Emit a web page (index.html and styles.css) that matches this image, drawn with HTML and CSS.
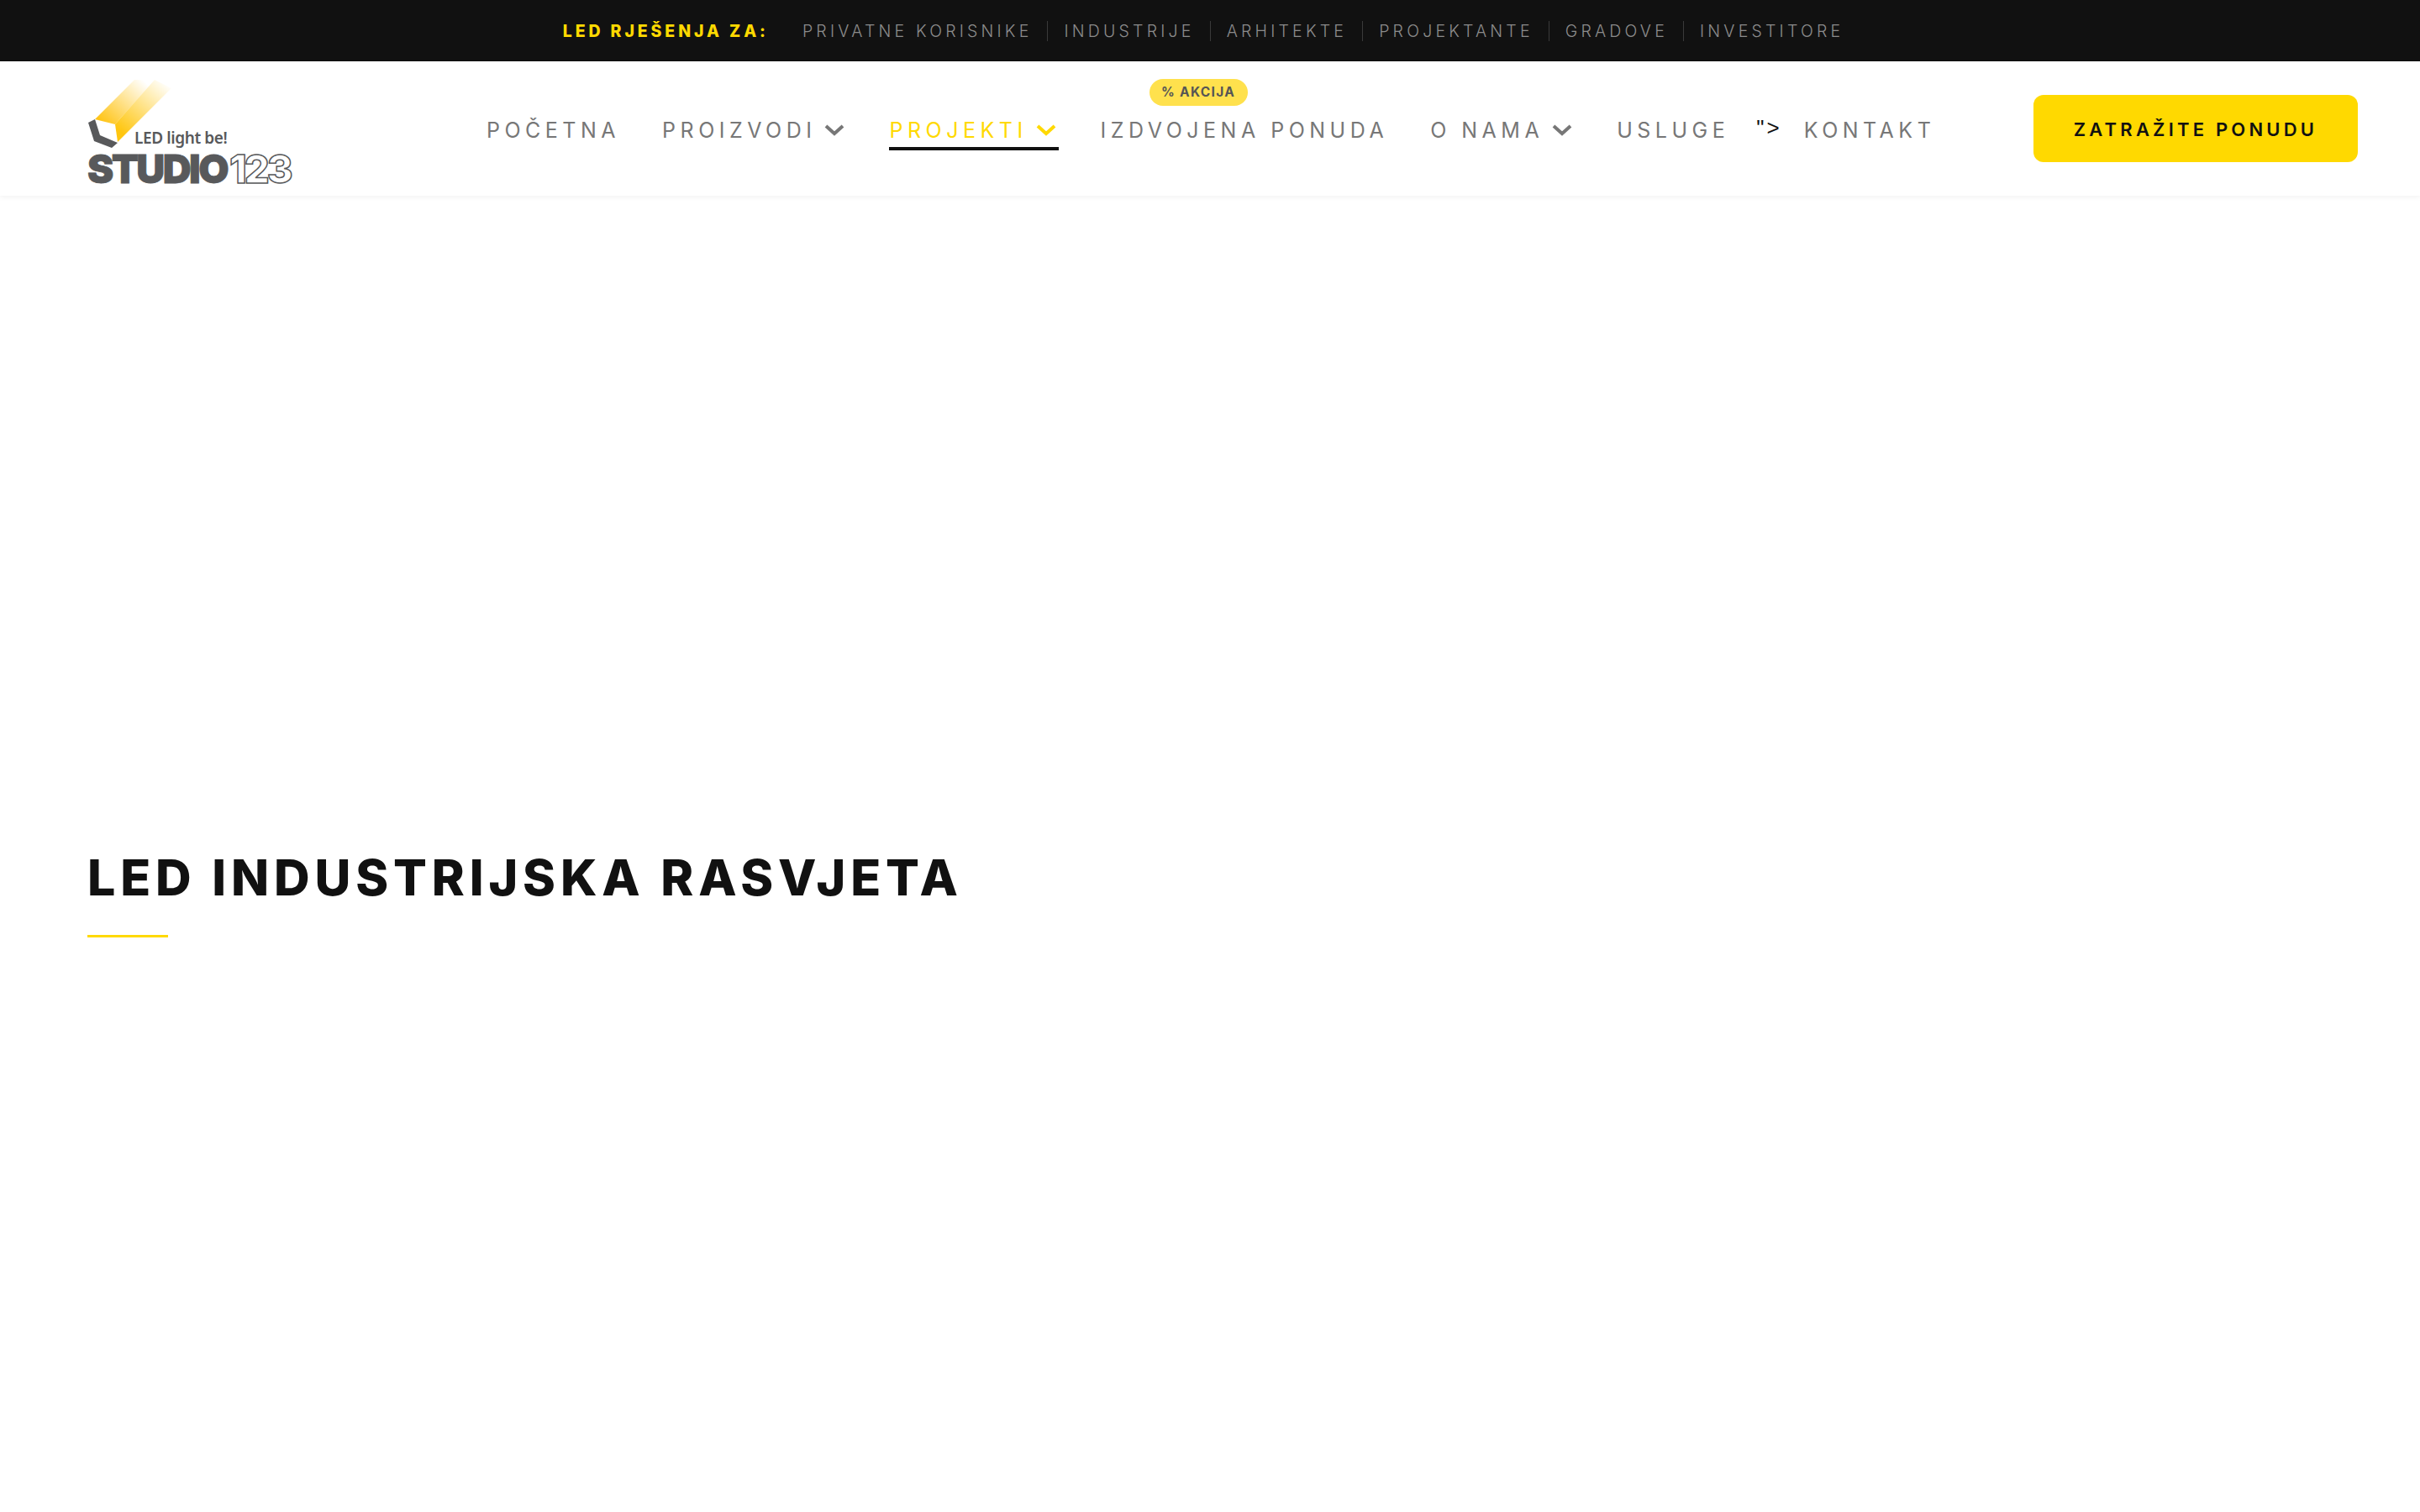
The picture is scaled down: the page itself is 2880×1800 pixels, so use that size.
FILE: index.html
```html
<!DOCTYPE html>
<html lang="hr">
<head>
  <meta charset="UTF-8" />
  <meta name="viewport" content="width=device-width, initial-scale=1.0" />
  <title>LED industrijska rasvjeta - Studio 123</title>
  <link rel="stylesheet" href="styles.css">
</head>
<body>
  <div class="top-bar">
    <strong class="top-title">LED RJEŠENJA ZA:</strong>
    <ul class="top-links">
      <li><a href="#">PRIVATNE KORISNIKE</a></li>
      <li><a href="#">INDUSTRIJE</a></li>
      <li><a href="#">ARHITEKTE</a></li>
      <li><a href="#">PROJEKTANTE</a></li>
      <li><a href="#">GRADOVE</a></li>
      <li><a href="#">INVESTITORE</a></li>
    </ul>
  </div>

  <header class="site-header">
    <a href="#" class="logo">
      <div class="logo-top">
        <svg width="104" height="88" viewBox="104 90 104 88">
          <defs>
            <linearGradient id="beam-left" gradientUnits="userSpaceOnUse" x1="120" y1="145" x2="170" y2="92">
              <stop offset="0" stop-color="#ffc20e" />
              <stop offset="1" stop-color="#ffc20e" stop-opacity="0" />
            </linearGradient>
            <linearGradient id="beam-right" gradientUnits="userSpaceOnUse" x1="145" y1="155" x2="198" y2="95">
              <stop offset="0" stop-color="#ffc60f" />
              <stop offset="1" stop-color="#ffc60f" stop-opacity="0" />
            </linearGradient>
          </defs>
          <polygon points="113,139 137,145 184,92 160,92" fill="url(#beam-left)" />
          <polygon points="137,145 140,166 204,102 184,92" fill="url(#beam-right)" />
          <polygon points="105,143 113,139 119,158 140,167 133,173 112,165" fill="#58595b" />
        </svg>
        <span class="logo-slogan">LED light be!</span>
      </div>
      <div class="logo-name">
        <span class="logo-studio">STUDIO</span><span class="logo-num">123</span>
      </div>
    </a>

    <nav class="main-nav">
      <a href="#" class="nav-item">POČETNA</a>
      <a href="#" class="nav-item">PROIZVODI
        <svg class="chev" width="24" height="14" viewBox="0 0 24 14"><polyline points="2,2 12,11 22,2" /></svg>
      </a>
      <a href="#" class="nav-item active">PROJEKTI
        <svg class="chev" width="24" height="14" viewBox="0 0 24 14"><polyline points="2,2 12,11 22,2" /></svg>
      </a>
      <a href="#" class="nav-item">IZDVOJENA PONUDA<span class="badge">% AKCIJA</span></a>
      <a href="#" class="nav-item">O NAMA
        <svg class="chev" width="24" height="14" viewBox="0 0 24 14"><polyline points="2,2 12,11 22,2" /></svg>
      </a>
      <a href="#" class="nav-item">USLUGE</a>
      <span class="stray">"&gt;</span>
      <a href="#" class="nav-item">KONTAKT</a>
    </nav>

    <a href="#" class="cta">ZATRAŽITE PONUDU</a>
  </header>

  <main class="content">
    <h1>LED INDUSTRIJSKA RASVJETA</h1>
    <div class="title-line"></div>
  </main>
</body>
</html>
```

FILE: styles.css
```css
* {
  margin: 0;
  padding: 0;
  box-sizing: border-box;
}
body {
  background: white;
  color: #111;
  font-family: Inter, "Noto Sans", sans-serif;
}
a {
  color: inherit;
  text-decoration: none;
}
.top-bar {
  height: 73px;
  background: #111;
  display: flex;
  justify-content: center;
  align-items: center;
  padding-right: 16px;
  font-size: 19.5px;
}
.top-title {
  color: #ffd900;
  font-weight: 800;
  letter-spacing: 3.9px;
  margin-right: 40px;
}
.top-links {
  display: flex;
  list-style: none;
  color: #8c8c8c;
  font-weight: 300;
  letter-spacing: 4.2px;
}
.top-links li + li {
  margin-left: 18px;
  padding-left: 19px;
  border-left: 1px solid #3a3a3a;
}
.site-header {
  height: 160px;
  display: flex;
  align-items: center;
  padding: 0 74px 0 104px;
  box-shadow: 0 2px 6px rgba(0, 0, 0, 0.05);
}
.logo {
  display: flex;
  flex-direction: column;
  width: 246px;
  margin-top: 4px;
  color: #58595b;
}
.logo-top {
  display: flex;
  align-items: flex-end;
  height: 88px;
}
.logo-top svg {
  flex-shrink: 0;
}
.logo-slogan {
  margin: 0 0 0 -48px;
  font-family: "Noto Sans", sans-serif;
  font-size: 19px;
  line-height: 22px;
  font-weight: 600;
  letter-spacing: -0.4px;
  white-space: nowrap;
  transform: translateY(-6px);
}
.logo-name {
  display: flex;
  height: 34px;
  margin-top: 3px;
  font-size: 47px;
  line-height: 34px;
}
.logo-studio {
  font-weight: 900;
  letter-spacing: -2.6px;
  -webkit-text-stroke: 0.8px #58595b;
}
.logo-num {
  margin-left: 3px;
  font-weight: 800;
  letter-spacing: -3px;
  color: white;
  -webkit-text-stroke: 1.5px #58595b;
}
.main-nav {
  display: flex;
  align-items: center;
  gap: 50px;
  margin-left: 229px;
  margin-top: 7px;
  font-size: 25px;
  font-weight: 400;
  letter-spacing: 5.5px;
  color: #777;
}
.nav-item {
  position: relative;
  display: flex;
  align-items: center;
  gap: 10px;
  white-space: nowrap;
  line-height: 30px;
  padding: 5px 0;
  border-bottom: 4px solid transparent;
}
.chev {
  fill: none;
  stroke: currentColor;
  stroke-width: 4;
  margin-right: 3px;
}
.nav-item.active {
  color: #ffd900;
  border-bottom-color: #111;
}
.badge {
  position: absolute;
  left: 58px;
  top: -41px;
  width: 117px;
  height: 32px;
  border-radius: 16px;
  background: #ffe14d;
  color: #555;
  font-size: 15.5px;
  font-weight: 700;
  letter-spacing: 1.3px;
  display: flex;
  align-items: center;
  justify-content: center;
}
.stray {
  font-family: "Liberation Sans", sans-serif;
  font-size: 26px;
  letter-spacing: 3px;
  color: #111;
  margin: -8px -24px 0 -18px;
}
.cta {
  width: 386px;
  height: 80px;
  margin-left: auto;
  border-radius: 12px;
  background: #ffd900;
  color: #111;
  font-size: 22px;
  font-weight: 600;
  letter-spacing: 4.2px;
  display: flex;
  align-items: center;
  justify-content: center;
  padding-top: 1px;
}
.content {
  padding: 776px 104px 0;
}
h1 {
  font-size: 59px;
  line-height: 72px;
  font-weight: 800;
  letter-spacing: 5.85px;
  color: #111;
}
.title-line {
  width: 96px;
  height: 3px;
  background: #ffd900;
  margin-top: 32px;
}
```
